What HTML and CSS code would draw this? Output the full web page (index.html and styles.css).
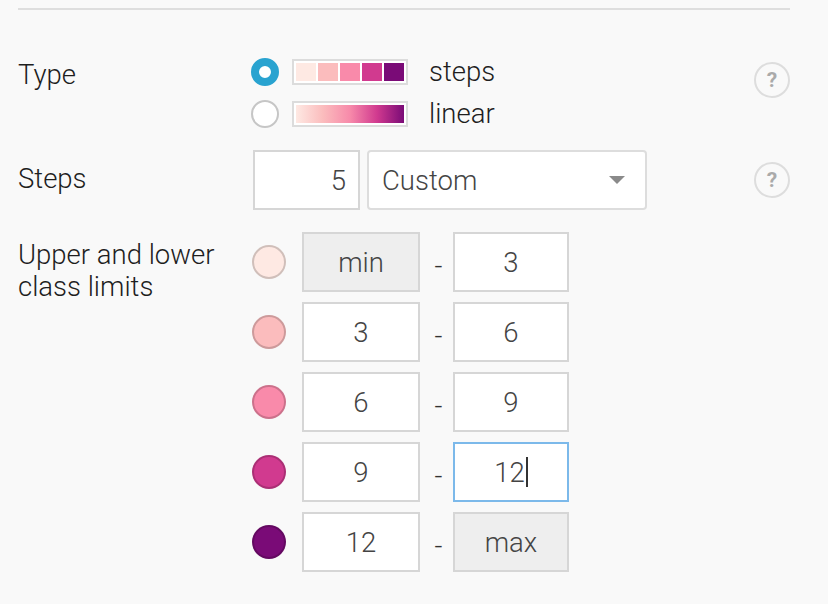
FILE: index.html
```html
<!DOCTYPE html>
<html>
<head>
<meta charset="utf-8">
<link rel="stylesheet" href="styles.css">
</head>
<body>
<div class="panel">
  <div class="rule"></div>

  <div class="row row-type">
    <div class="label">Type</div>
    <div class="options">
      <div class="option">
        <span class="radio checked"></span>
        <span class="ramp">
          <i class="sw c1"></i><i class="sw c2"></i><i class="sw c3"></i><i class="sw c4"></i><i class="sw c5"></i>
        </span>
        <span class="opt-text">steps</span>
      </div>
      <div class="option">
        <span class="radio"></span>
        <span class="ramp"><i class="grad"></i></span>
        <span class="opt-text">linear</span>
      </div>
    </div>
    <span class="help help-top">?</span>
  </div>

  <div class="row row-steps">
    <div class="label">Steps</div>
    <div class="steps-controls">
      <div class="field num">5</div>
      <div class="select"><span>Custom</span><span class="caret-down"></span></div>
    </div>
    <span class="help help-mid">?</span>
  </div>

  <div class="row row-class">
    <div class="label">Upper and lower<br>class limits</div>
    <div class="limits">
      <div class="limit">
        <span class="dot c1"></span>
        <div class="field lo disabled">min</div>
        <span class="dash">-</span>
        <div class="field hi">3</div>
      </div>
      <div class="limit">
        <span class="dot c2"></span>
        <div class="field lo">3</div>
        <span class="dash">-</span>
        <div class="field hi">6</div>
      </div>
      <div class="limit">
        <span class="dot c3"></span>
        <div class="field lo">6</div>
        <span class="dash">-</span>
        <div class="field hi">9</div>
      </div>
      <div class="limit">
        <span class="dot c4"></span>
        <div class="field lo">9</div>
        <span class="dash">-</span>
        <div class="field hi focus">12<span class="cursor"></span></div>
      </div>
      <div class="limit">
        <span class="dot c5"></span>
        <div class="field lo">12</div>
        <span class="dash">-</span>
        <div class="field hi disabled">max</div>
      </div>
    </div>
    <span></span>
  </div>
</div>
</body>
</html>
```

FILE: styles.css
```css
body {
  margin: 0;
  background: #f9f9f9;
  font-family: Roboto, "Noto Sans", sans-serif;
  font-weight: 300;
  font-size: 27.5px;
  color: #1e1e1e;
}

.panel {
  padding: 8px 38px 0 18px;
}

.rule {
  height: 2px;
  background: #dedede;
}

.row {
  display: grid;
  grid-template-columns: 233px 1fr 36px;
  align-items: start;
}

.label {
  line-height: 32px;
}

/* Type row */
.row-type {
  margin-top: 46px;
}
.row-type .label {
  margin-top: 3px;
}
.options {
  display: flex;
  flex-direction: column;
  gap: 10px;
}
.option {
  display: flex;
  align-items: center;
  height: 32px;
}
.radio {
  width: 28px;
  height: 28px;
  box-sizing: border-box;
  border-radius: 50%;
  border: 2px solid #c6c6c6;
  background: #fff;
}
.radio.checked {
  border: 8px solid #29a3d0;
}
.ramp {
  margin-left: 13px;
  width: 116px;
  height: 26px;
  box-sizing: border-box;
  border: 2px solid #dcdcdc;
  background: #fff;
  padding: 2px;
  display: flex;
  gap: 2px;
}
.sw {
  flex: 1;
}
.grad {
  flex: 1;
  background: linear-gradient(to right, #fee9e3 0%, #fbbcbd 25%, #f78aaa 50%, #d13a8f 75%, #7a0b77 100%);
}
.c1 { background: #fee9e3; }
.c2 { background: #fbbcbd; }
.c3 { background: #f98aaa; }
.c4 { background: #d13a8f; }
.c5 { background: #7a0b77; }

.opt-text {
  margin-left: 21px;
  line-height: 32px;
}

.help {
  width: 36px;
  height: 36px;
  box-sizing: border-box;
  border: 2px solid #dddddd;
  border-radius: 50%;
  color: #aaaaaa;
  font-weight: bold;
  font-size: 21px;
  display: flex;
  align-items: center;
  justify-content: center;
}
.help-top {
  margin-top: 6px;
}
.help-mid {
  align-self: center;
}

/* Steps row */
.row-steps {
  margin-top: 20px;
}
.row-steps .label {
  margin-top: 13px;
}
.steps-controls {
  display: flex;
  gap: 7px;
  margin-left: 2px;
}
.field {
  box-sizing: border-box;
  height: 60px;
  border: 2px solid #d6d6d6;
  background: #fff;
  color: #444;
  display: flex;
  align-items: center;
  justify-content: center;
}
.field.num {
  width: 107px;
  justify-content: flex-end;
  padding-right: 12px;
}
.select {
  box-sizing: border-box;
  width: 280px;
  height: 60px;
  border: 2px solid #dddddd;
  border-radius: 4px;
  background: #fff;
  color: #444;
  display: flex;
  align-items: center;
  justify-content: space-between;
  padding: 0 20px 0 13px;
}
.caret-down {
  width: 0;
  height: 0;
  border-left: 8px solid transparent;
  border-right: 8px solid transparent;
  border-top: 8px solid #8a8a8a;
}

/* Class limits */
.row-class {
  margin-top: 22px;
}
.row-class .label {
  margin-top: 7px;
}
.limits {
  display: flex;
  flex-direction: column;
  gap: 10px;
}
.limit {
  display: flex;
  align-items: center;
  height: 60px;
}
.dot {
  width: 34px;
  height: 34px;
  box-sizing: border-box;
  border-radius: 50%;
  margin-left: 1px;
  margin-right: 16px;
  border: 2px solid rgba(0, 0, 0, 0.18);
}
.field.lo {
  width: 118px;
}
.field.hi {
  width: 116px;
}
.field.disabled {
  background: #eeeeee;
}
.field.focus {
  border-color: #7cb9ea;
}
.cursor {
  display: inline-block;
  width: 2px;
  height: 30px;
  background: #333;
  margin-left: 1px;
}
.dash {
  width: 33px;
  text-align: center;
  padding-left: 4px;
  box-sizing: border-box;
  color: #333;
  padding-top: 6px;
}
```
